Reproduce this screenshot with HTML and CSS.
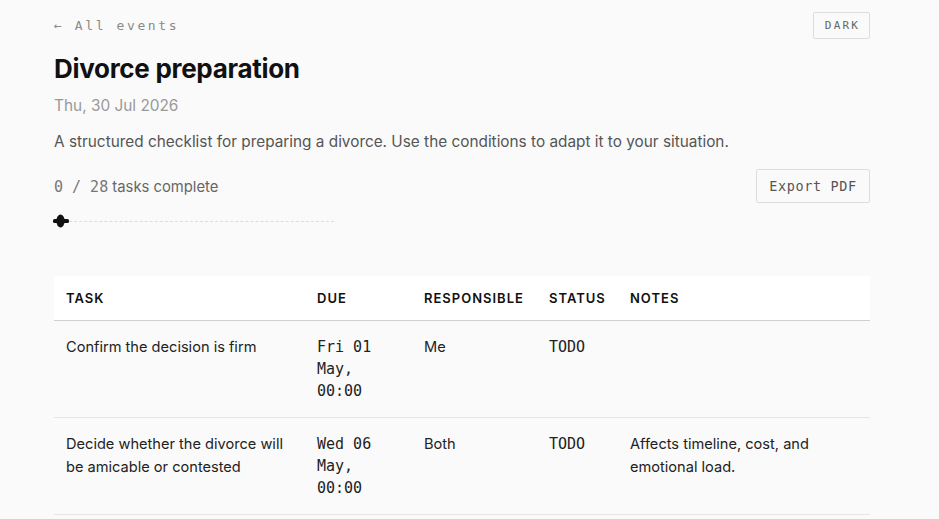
FILE: index.html
```html
<!DOCTYPE html>
<html lang="en">
<head>
<meta charset="utf-8">
<title>Divorce preparation</title>
<link rel="stylesheet" href="styles.css">
</head>
<body>
<div class="page">
  <div class="topbar">
    <a class="back" href="#">← All events</a>
    <button class="theme-btn">DARK</button>
  </div>
  <h1 class="title">Divorce preparation</h1>
  <div class="date">Thu, 30 Jul 2026</div>
  <p class="desc">A structured checklist for preparing a divorce. Use the conditions to adapt it to your situation.</p>
  <div class="progress-row">
    <div class="progress-info">
      <div class="count"><span class="mono">0 / 28</span> tasks complete</div>
      <div class="track">
        <svg class="thumb" width="16" height="16" viewBox="0 0 16 16"><rect x="0" y="6" width="16" height="4" rx="1.5" fill="#111"/><ellipse cx="7.5" cy="8" rx="4.2" ry="6.5" fill="#111"/></svg>
      </div>
    </div>
    <button class="export-btn">Export PDF</button>
  </div>
  <table class="tasks">
    <thead>
      <tr><th class="c-task">TASK</th><th class="c-due">DUE</th><th class="c-resp">RESPONSIBLE</th><th class="c-status">STATUS</th><th class="c-notes">NOTES</th></tr>
    </thead>
    <tbody>
      <tr>
        <td>Confirm the decision is firm</td>
        <td class="mono due">Fri 01 May, 00:00</td>
        <td>Me</td>
        <td class="mono status">TODO</td>
        <td></td>
      </tr>
      <tr>
        <td>Decide whether the divorce will be amicable or contested</td>
        <td class="mono due">Wed 06 May, 00:00</td>
        <td>Both</td>
        <td class="mono status">TODO</td>
        <td>Affects timeline, cost, and emotional load.</td>
      </tr>
    </tbody>
  </table>
</div>
</body>
</html>
```

FILE: styles.css
```css
html, body {
  margin: 0;
  padding: 0;
  background: #fafafa;
}
body {
  font-family: Inter, "Noto Sans", sans-serif;
  color: #1a1a1a;
}
.mono {
  font-family: "DejaVu Sans Mono", "Liberation Mono", monospace;
}
.page {
  width: 816px;
  margin-left: 54px;
  padding-top: 12px;
}
.topbar {
  display: flex;
  justify-content: space-between;
  align-items: flex-start;
  height: 27px;
}
.back {
  font-family: "DejaVu Sans Mono", "Liberation Mono", monospace;
  font-size: 13px;
  letter-spacing: 2.6px;
  color: #8a8a8a;
  text-decoration: none;
  margin-top: 6px;
}
.theme-btn {
  font-family: "DejaVu Sans Mono", "Liberation Mono", monospace;
  font-size: 11px;
  letter-spacing: 2.2px;
  color: #666;
  background: #fafafa;
  border: 1px solid #ddd;
  border-radius: 2px;
  height: 27px;
  width: 57px;
  padding: 0 0 0 2px;
}
.title {
  margin: 14px 0 0;
  font-size: 26px;
  font-weight: 700;
  letter-spacing: -0.3px;
  line-height: 32px;
  color: #111;
}
.date {
  margin-top: 11px;
  font-size: 15.4px;
  line-height: 20px;
  color: #999;
}
.desc {
  margin: 16px 0 0;
  font-size: 15.35px;
  line-height: 20px;
  color: #555;
}
.progress-row {
  display: flex;
  justify-content: space-between;
  align-items: flex-start;
  margin-top: 17px;
}
.count {
  font-size: 14.8px;
  line-height: 20px;
  color: #666;
  margin-top: 8px;
}
.count .mono {
  font-size: 15px;
  color: #777;
}
.track {
  position: relative;
  width: 280px;
  height: 2px;
  border-top: 1px dashed #dcdcdc;
  margin-top: 24px;
}
.thumb {
  position: absolute;
  left: -1px;
  top: -9px;
}
.export-btn {
  font-family: "DejaVu Sans Mono", "Liberation Mono", monospace;
  font-size: 13.5px;
  letter-spacing: 0.6px;
  color: #555;
  background: #fafafa;
  border: 1px solid #ddd;
  border-radius: 2px;
  width: 114px;
  height: 34px;
  padding: 0;
}
.tasks {
  margin-top: 52px;
  width: 816px;
  border-collapse: collapse;
  table-layout: fixed;
}
.tasks th {
  background: #fff;
  text-align: left;
  font-size: 13px;
  font-weight: 600;
  letter-spacing: 1px;
  color: #111;
  height: 44px;
  padding: 0 12px;
  border-bottom: 1px solid #cfcfcf;
  box-sizing: border-box;
}
.c-task { width: 251px; }
.c-due { width: 107px; }
.c-resp { width: 125px; }
.c-status { width: 81px; }
.c-notes { width: 252px; }
.tasks td {
  vertical-align: top;
  padding: 15px 12px 15px;
  font-size: 14.6px;
  line-height: 23px;
  color: #222;
  border-bottom: 1px solid #e6e6e6;
}
.tasks td.due {
  font-size: 15px;
  line-height: 22px;
  padding-top: 15px;
}
.tasks td.status {
  font-size: 15px;
  letter-spacing: 0;
}
```
